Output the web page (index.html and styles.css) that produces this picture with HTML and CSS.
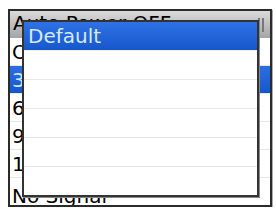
FILE: index.html
```html
<!DOCTYPE html>
<html lang="en">
<head>
    <meta charset="UTF-8">
    <meta name="viewport" content="width=device-width, initial-scale=1.0">
    <title>Auto Power OFF</title>
    <link rel="stylesheet" href="styles.css">
</head>
<body>

<div class="screen">
    <div class="header">
        <span>Auto Power OFF</span>
        <span class="marks"><i></i><i></i></span>
    </div>
    <div class="list">
        <div class="row">Off</div>
        <div class="row selected">30 Min</div>
        <div class="row">60 Min</div>
        <div class="row">90 Min</div>
        <div class="row">120 Min</div>
        <div class="row last">No Signal</div>
    </div>

    <div class="popup">
        <div class="option selected">Default</div>
        <div class="option"></div>
        <div class="option"></div>
        <div class="option"></div>
        <div class="option"></div>
        <div class="option"></div>
    </div>
</div>

</body>
</html>
```

FILE: styles.css
```css
body {
    margin: 0;
    background-color: #fff;
    font-family: "DejaVu Sans", sans-serif;
}
.screen {
    position: relative;
    width: 260px;
    height: 194px;
    margin: 9px 0 0 8px;
    border: 2px solid #2b2b2b;
    box-shadow: 1px 1px 0 #aaa;
    overflow: hidden;
    background-color: #fff;
}
.header {
    display: flex;
    justify-content: space-between;
    height: 27px;
    padding: 1px 6px 0 3px;
    box-sizing: border-box;
    font-size: 20px;
    line-height: 22px;
    color: #000;
    background: linear-gradient(#dadada, #a4a4a4);
}
.marks {
    display: flex;
    gap: 2px;
    padding-top: 6px;
}
.marks i {
    width: 2px;
    height: 14px;
    background-color: #777;
}
.row {
    height: 28px;
    padding-left: 2px;
    font-size: 20px;
    line-height: 28px;
    color: #000;
    border-bottom: 1px solid #e6e6e6;
    box-sizing: border-box;
}
.row.selected {
    background: linear-gradient(#2d6fe2, #1656cc);
    color: #cfe6ff;
}
.row.last {
    padding-top: 4px;
    border-bottom: none;
}
.popup {
    position: absolute;
    left: 12px;
    top: 9px;
    width: 233px;
    border: 2px solid #333;
    box-shadow: 1px 1px 0 #888;
    background-color: #fff;
}
.option {
    height: 29px;
    padding-left: 4px;
    font-size: 20px;
    line-height: 29px;
    border-bottom: 1px solid #e8e8e8;
    box-sizing: border-box;
}
.option:last-child {
    height: 28px;
    border-bottom: none;
}
.option.selected {
    background: linear-gradient(#2f72e4, #1757cd);
    color: #d4ebff;
    border-bottom-color: #f0f0f0;
}
```
